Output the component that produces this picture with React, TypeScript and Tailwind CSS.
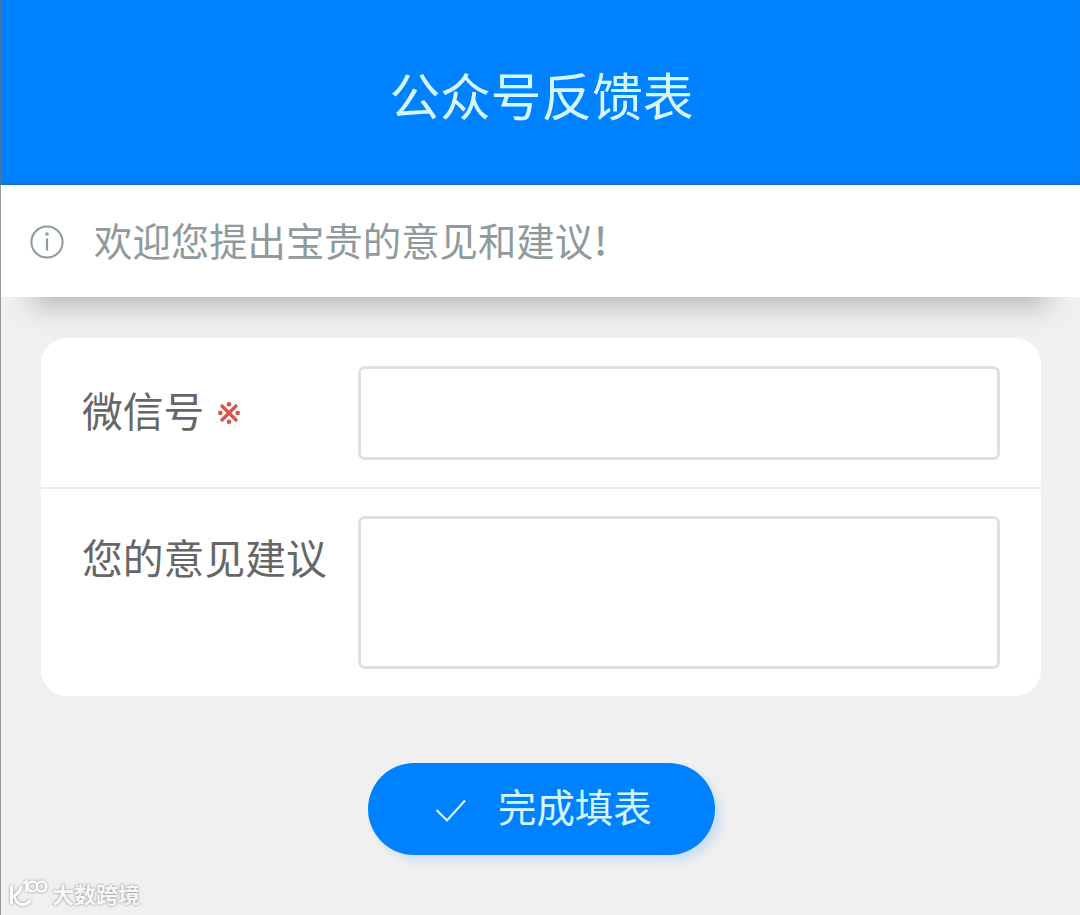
import type { ReactNode } from "react";

interface FieldRowProps {
  label: string;
  required?: boolean;
  labelClass: string;
  children: ReactNode;
}

const inputClass =
  "block w-[642px] resize-none rounded-[7px] border-3 border-[#e0e0e0] bg-white px-4 text-4xl text-[#666] outline-none";

function InfoIcon() {
  return (
    <svg width="34" height="34" viewBox="0 0 34 34" fill="none" stroke="#8e9a9c">
      <circle cx="17" cy="17" r="15.6" strokeWidth="2" />
      <path d="M17 13.5V25.5" strokeWidth="2.2" />
      <circle cx="17" cy="9" r="1.8" fill="#8e9a9c" stroke="none" />
    </svg>
  );
}

function CheckIcon() {
  return (
    <svg width="32" height="24" viewBox="0 0 32 24" fill="none" stroke="#d5f8ff">
      <path d="M1.5 11L12 21.5L30 1.5" strokeWidth="2.2" />
    </svg>
  );
}

function RequiredMark() {
  return (
    <svg width="22" height="22" viewBox="0 0 22 22" fill="#d9534a">
      <path d="M3 3L19 19M19 3L3 19" stroke="#d9534a" strokeWidth="3.2" />
      <circle cx="11" cy="2.3" r="2.3" />
      <circle cx="11" cy="19.7" r="2.3" />
      <circle cx="2.3" cy="11" r="2.3" />
      <circle cx="19.7" cy="11" r="2.3" />
    </svg>
  );
}

function FieldRow({ label, required, labelClass, children }: FieldRowProps) {
  return (
    <div className="flex items-start pl-[41px]">
      <label
        className={`flex w-[276px] items-center text-[40.8px] leading-[60px] whitespace-nowrap text-[#666] ${labelClass}`}
      >
        {label}
        {required ? (
          <span className="mt-1.5 ml-[14px]">
            <RequiredMark />
          </span>
        ) : null}
      </label>
      {children}
    </div>
  );
}

function Watermark() {
  return (
    <div className="absolute top-[877px] left-[7px] flex items-center text-white">
      <svg
        width="42"
        height="32"
        viewBox="0 0 42 32"
        fill="none"
        stroke="currentColor"
        strokeWidth="2.8"
        className="drop-shadow-[0_0_1.5px_rgba(0,0,0,0.4)]"
      >
        <path d="M4.5 8.5V27M14 9.5C13.5 13.5 10.5 17 7 18.5C8.5 24.5 11.5 27.5 15.5 27.5C19 27.5 21.5 26 23 23" />
        <path d="M16.5 6L19.5 4.5V15" strokeWidth="2.2" />
        <circle cx="25.5" cy="9.5" r="4.8" strokeWidth="2.2" />
        <circle cx="34.5" cy="9.5" r="4.8" strokeWidth="2.2" />
      </svg>
      <span className="ml-[3px] text-[22px] leading-8 font-bold text-[#f8f8f8] [text-shadow:0_0_2px_rgba(0,0,0,0.35),0_0_3px_rgba(0,0,0,0.2)]">
        大数跨境
      </span>
    </div>
  );
}

export default function App() {
  return (
    <div className="relative h-[915px] w-[1080px] overflow-hidden bg-[#f0f0f0] font-['Noto_Sans_CJK_SC',sans-serif]">
      <header className="flex h-[185px] justify-center bg-[#0081ff] pt-[57px] pl-[3px] shadow-[inset_0_-5px_4px_-3px_rgba(40,90,120,0.45)]">
        <h1 className="text-[50.7px] leading-[74px] text-[#d5f8ff]">公众号反馈表</h1>
      </header>

      <div className="flex h-28 items-center bg-white pl-[30px] shadow-[0_40px_28px_-32px_rgba(0,0,0,0.25)]">
        <span className="mt-px">
          <InfoIcon />
        </span>
        <p className="-mt-1 ml-[30px] text-[38.4px] leading-[56px] text-[#8e9a9c]">
          欢迎您提出宝贵的意见和建议
          <span className="ml-px font-medium">!</span>
        </p>
      </div>

      <form className="relative mt-[41px] ml-[41px] w-[1000px]" onSubmit={(e) => e.preventDefault()}>
        <div className="h-[357.5px] rounded-[26px] bg-white">
          <div className="h-[151px] border-b-2 border-[#ebebeb] pt-7">
            <FieldRow label="微信号" required labelClass="pt-[14px]">
              <input type="text" className={`${inputClass} h-[94px]`} />
            </FieldRow>
          </div>
          <div className="pt-[27px]">
            <FieldRow label="您的意见建议" labelClass="pt-[11px]">
              <textarea className={`${inputClass} h-[153px]`} />
            </FieldRow>
          </div>
        </div>

        <button
          type="submit"
          className="mt-[67.5px] ml-[327px] flex h-[92px] w-[347px] items-center rounded-full bg-[#0081ff] pl-[67px] text-[38.4px] leading-[56px] text-[#d5f8ff] shadow-[6px_6px_8px_rgba(0,129,255,0.15)]"
        >
          <span className="mt-1">
            <CheckIcon />
          </span>
          <span className="-mt-2 ml-[31px]">完成填表</span>
        </button>
      </form>

      <Watermark />
      {/* thin frame line on the left edge */}
      <div className="absolute inset-y-0 left-0 w-px bg-[#707070]/70" />
    </div>
  );
}
